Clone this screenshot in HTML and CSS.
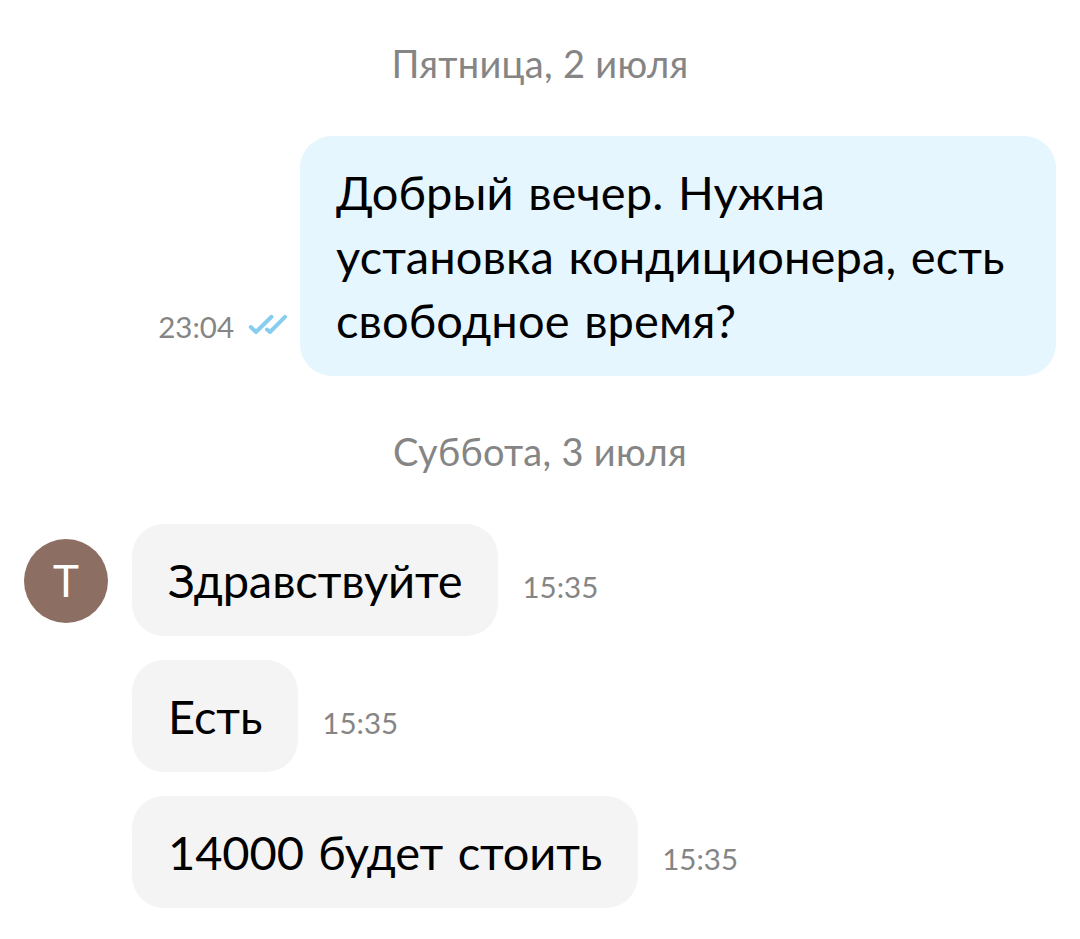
FILE: index.html
```
<!DOCTYPE html>
<html lang="ru">
	<head>
		<meta charset="UTF-8">
		<title>Чат</title>
		<link rel="stylesheet" href="styles.css">
	</head>
	<body>
		<div class="chat">
			<div class="date">Пятница, 2 июля</div>
			<div class="msg out">
				<span class="time">23:04</span>
				<svg class="check" viewBox="0 0 40 26" width="40" height="26">
					<path d="M2.800 15l5.200 5L23.500 4.800M19 17.500l3 2.500L37 4.800"/>
				</svg>
				<div class="bubble">Добрый вечер. Нужна<br>установка кондиционера, есть<br>свободное время?</div>
			</div>
			<div class="date second">Суббота, 3 июля</div>
			<div class="msg">
				<div class="avatar">Т</div>
				<div class="bubble">Здравствуйте</div>
				<span class="time">15:35</span>
			</div>
			<div class="msg next">
				<div class="bubble">Есть</div>
				<span class="time">15:35</span>
			</div>
			<div class="msg next">
				<div class="bubble last">14000 будет стоить</div>
				<span class="time">15:35</span>
			</div>
		</div>
	</body>
</html>
```
FILE: styles.css
```
*{
	margin: 0;
	padding: 0;
	box-sizing: border-box;
}
body{
	background-color: #fff;
	font-family: Lato, "Open Sans", sans-serif;
	color: #000;
}
.chat{
	padding: 39px 24px 0;
}
.date{
	height: 48px;
	line-height: 48px;
	font-size: 38px;
	letter-spacing: 0.3px;
	text-align: center;
	color: #858585;
	margin-bottom: 49px;
}
.second{
	margin-top: 51px;
}
.msg{
	display: flex;
	align-items: center;
	margin-bottom: 24px;
}
.bubble{
	padding: 24px 36px;
	font-size: 47px;
	line-height: 64px;
	letter-spacing: -0.1px;
	white-space: nowrap;
	background-color: #f4f4f4;
	border-radius: 32px;
}
.last{
	word-spacing: 2.5px;
}
.time{
	margin-left: 24px;
	padding-top: 12px;
	font-size: 29.5px;
	color: #858585;
}
.out{
	justify-content: flex-end;
	align-items: flex-end;
}
.out .bubble{
	width: 756px;
	letter-spacing: 0.1px;
	word-spacing: 2.5px;
	background-color: #e5f6ff;
}
.out .time{
	margin-right: 14px;
	padding-bottom: 32px;
}
.check{
	margin-right: 12px;
	margin-bottom: 38px;
	fill: none;
	stroke: #87cdf0;
	stroke-width: 4;
	stroke-linecap: round;
	stroke-linejoin: round;
}
.avatar{
	width: 84px;
	height: 84px;
	margin-top: 2px;
	margin-right: 24px;
	border-radius: 50%;
	background-color: #8d6e63;
	color: #fff;
	font-family: Roboto, sans-serif;
	font-size: 45px;
	line-height: 85px;
	text-align: center;
}
.next{
	padding-left: 108px;
}
```
